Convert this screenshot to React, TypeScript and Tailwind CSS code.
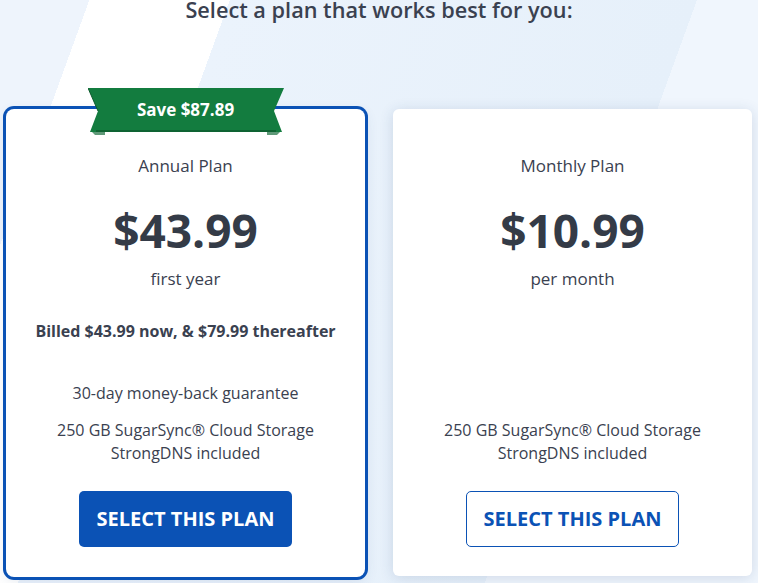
type Plan = {
    name: string;
    price: string;
    period: string;
    billed?: string;
    guarantee?: string;
    primary?: boolean;
    save?: string;
};

const plans: Plan[] = [
    {
        name: 'Annual Plan',
        price: '$43.99',
        period: 'first year',
        billed: 'Billed $43.99 now, & $79.99 thereafter',
        guarantee: '30-day money-back guarantee',
        primary: true,
        save: 'Save $87.89',
    },
    {
        name: 'Monthly Plan',
        price: '$10.99',
        period: 'per month',
    },
];

function Ribbon({ label }: { label: string }) {
    return (
        <div className="absolute left-1/2 top-[-21px] h-[47px] w-[196px] -translate-x-1/2">
            <svg className="absolute inset-0" width="196" height="47" viewBox="0 0 196 47">
                <polygon points="4,44 17,44 17,47 7,47" fill="#5f9978" />
                <polygon points="179,44 192,44 189,47 179,47" fill="#5f9978" />
                <polygon points="0,0 196,0 186,23 194,44 2,44 10,23" fill="#137c3f" />
                <rect x="8" y="42" width="180" height="2" fill="#0e6332" />
                <line x1="0" y1="0" x2="10" y2="23" stroke="#0d5a2d" strokeWidth="1" />
            </svg>
            <div className="relative flex h-[44px] items-center justify-center text-[17px] font-bold text-white">
                {label}
            </div>
        </div>
    );
}

function PlanCard({ plan }: { plan: Plan }) {
    return (
        <div
            className={
                plan.primary
                    ? 'relative flex h-[468px] w-[359px] flex-col items-center rounded-lg bg-white pt-[45px] shadow-[0_0_0_3px_#0b52b5,0_4px_14px_rgba(40,70,120,0.12)]'
                    : 'relative flex h-[467px] w-[359px] flex-col items-center rounded-md bg-white pt-[45px] shadow-[0_2px_14px_rgba(40,70,120,0.16)]'
            }
        >
            {plan.save && <Ribbon label={plan.save} />}
            <div className="text-[17px] leading-6">{plan.name}</div>
            <div className="mt-6 text-[46px] font-bold leading-[56px] text-[#343b47]">{plan.price}</div>
            <div className="mt-[9px] text-[17px] leading-6">{plan.period}</div>
            <div className="mt-[29px] h-[22px] text-[16px] font-bold leading-[22px]">{plan.billed}</div>
            <div className="mt-[40px] h-[23px] text-[16px] leading-[23px]">{plan.guarantee}</div>
            <div className="mt-[14px] text-center text-[16px] leading-[23px]">
                250 GB SugarSync® Cloud Storage
                <br />
                StrongDNS included
            </div>
            <button
                className={
                    plan.primary
                        ? 'mt-[26px] h-14 w-[213px] rounded-[5px] bg-[#0b52b5] text-[20px] font-bold text-white'
                        : 'mt-[26px] h-14 w-[213px] rounded-[5px] border border-[#0b52b5] bg-white text-[20px] font-bold text-[#0b52b5]'
                }
            >
                SELECT THIS PLAN
            </button>
        </div>
    );
}

export default function App() {
    return (
        <div className="h-[583px] w-full overflow-hidden bg-[linear-gradient(110deg,#eef4fc_0px,#eef4fc_84px,#ffffff_84px,#ffffff_216px,#ebf3fc_216px,#e6f0fa_655px,#f0f6fd_655px)] font-['Open_Sans',sans-serif] text-[#3a4150]">
            <h1 className="text-center text-[21.7px] font-semibold leading-5">Select a plan that works best for you:</h1>
            <div className="mt-[89px] flex justify-between px-[6px]">
                {plans.map((p) => (
                    <PlanCard key={p.name} plan={p} />
                ))}
            </div>
        </div>
    );
}
